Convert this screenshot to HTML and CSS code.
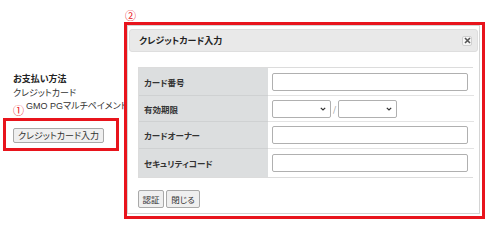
FILE: index.html
```html
<!DOCTYPE html>
<html lang="ja">
<head>
<meta charset="utf-8">
<link rel="stylesheet" href="styles.css">
</head>
<body>
<div class="page">
  <div class="payment">
    <div class="pay-title">お支払い方法</div>
    <div class="pay-line">クレジットカード</div>
    <div class="pay-line indent">GMO PGマルチペイメント</div>
  </div>
  <div class="annot-box1">
    <button class="btn open-btn">クレジットカード入力</button>
  </div>
  <span class="annot-num n1">①</span>
  <span class="annot-num n2">②</span>

  <div class="annot-box2">
    <div class="modal">
      <div class="modal-head">
        <span class="modal-title">クレジットカード入力</span>
        <span class="close">
          <svg width="7" height="7" viewBox="0 0 7 7"><path d="M1 1L6 6M6 1L1 6" stroke="#555" stroke-width="1.6"/></svg>
        </span>
      </div>
      <div class="modal-body">
        <div class="form-table">
          <div class="lab r1">カード番号</div>
          <div class="val r1"><span class="inp"></span></div>
          <div class="lab r2">有効期限</div>
          <div class="val r2">
            <span class="sel"><svg width="6" height="4" viewBox="0 0 6 4"><path d="M0.8 0.8L3 3L5.2 0.8" fill="none" stroke="#333" stroke-width="1.2"/></svg></span>
            <span class="slash">/</span>
            <span class="sel"><svg width="6" height="4" viewBox="0 0 6 4"><path d="M0.8 0.8L3 3L5.2 0.8" fill="none" stroke="#333" stroke-width="1.2"/></svg></span>
          </div>
          <div class="lab r3">カードオーナー</div>
          <div class="val r3"><span class="inp"></span></div>
          <div class="lab r4">セキュリティコード</div>
          <div class="val r4 last"><span class="inp"></span></div>
        </div>
        <div class="actions">
          <button class="btn act">認証</button>
          <button class="btn act">閉じる</button>
        </div>
      </div>
    </div>
  </div>
</div>
</body>
</html>
```
FILE: styles.css
```css
* { box-sizing: border-box; }
html, body { margin: 0; padding: 0; background: #fff; }
body {
  font-family: "Noto Sans CJK JP", "Liberation Sans", sans-serif;
  font-feature-settings: "palt";
  color: #333;
  width: 500px;
  height: 242px;
  overflow: hidden;
}
.page { position: relative; width: 500px; height: 242px; }

.payment { padding: 72px 0 0 13px; font-size: 9px; line-height: 13.5px; }
.pay-title { font-weight: bold; color: #222; }
.pay-line { color: #333; white-space: nowrap; }
.indent { padding-left: 13px; padding-top: 1px; font-family: "Liberation Sans", "Noto Sans CJK JP", sans-serif; }

.annot-box1 {
  margin: 4px 0 0 3px;
  width: 116px;
  height: 33px;
  border: 3px solid #e8141c;
  padding: 7px 0 0 7px;
  position: relative;
  background: #fff;
}
.btn {
  font-family: "Noto Sans CJK JP", sans-serif;
  font-feature-settings: "palt";
  background: #efefef;
  border: 1px solid #a9a9a9;
  border-radius: 2px;
  color: #333;
  padding: 0;
  margin: 0;
  display: flex;
  align-items: center;
  justify-content: center;
}
.open-btn { width: 91px; height: 15px; font-size: 9px; }

.annot-num {
  position: absolute;
  color: #e8141c;
  font-family: "Noto Sans CJK JP", "DejaVu Sans", sans-serif;
  font-size: 11px;
  line-height: 11px;
}
.n1 { left: 13px; top: 105px; }
.n2 { left: 125px; top: 10px; }

.annot-box2 {
  position: absolute;
  left: 124px;
  top: 22px;
  width: 361px;
  height: 197px;
  border: 3px solid #e8141c;
  background: #fff;
  padding: 0 2px 2px 0;
}
.modal {
  width: 100%;
  height: 100%;
  border: 1px solid #d4d4d4;
  padding: 3px 1px 0 1px;
  background: #fff;
}
.modal-head {
  height: 23px;
  background: #e9e9e9;
  border: 1px solid #dedede;
  border-radius: 3px;
  display: flex;
  align-items: center;
  justify-content: space-between;
  padding: 0 5px 0 9px;
}
.modal-title { font-size: 9px; font-weight: bold; color: #222; }
.close {
  width: 10px;
  height: 10px;
  border: 1px solid #cfcfcf;
  border-radius: 2px;
  background: #f6f6f6;
  display: flex;
  align-items: center;
  justify-content: center;
}
.modal-body { padding: 15px 0 0 9px; }
.form-table {
  width: 335px;
  display: grid;
  grid-template-columns: 129px 206px;
  grid-template-rows: 28px 26px 27px 28px;
  border: 1px solid #dcdcdc;
}
.lab {
  background: #dcdedf;
  font-size: 8.5px;
  font-weight: bold;
  color: #333;
  display: flex;
  align-items: center;
  padding-left: 5px;
  border-bottom: 1px solid #cfd1d2;
}
.val {
  display: flex;
  align-items: center;
  padding-left: 4px;
  border-bottom: 1px solid #e3e3e3;
  background: #fff;
}
.lab.r4, .val.r4 { border-bottom: none; }
.inp {
  width: 196px;
  height: 18px;
  border: 1px solid #b0b0b0;
  border-radius: 2px;
  background: #fff;
}
.sel {
  width: 59px;
  height: 18px;
  border: 1px solid #b0b0b0;
  border-radius: 2px;
  background: #fff;
  display: flex;
  align-items: center;
  justify-content: flex-end;
  padding-right: 4px;
}
.slash { font-size: 8px; color: #888; width: 7px; text-align: center; }
.actions { display: flex; gap: 2px; margin-top: 12px; }
.act { height: 18px; font-size: 8.5px; }
.act:first-child { width: 26px; }
.act:last-child { width: 34px; }
```
